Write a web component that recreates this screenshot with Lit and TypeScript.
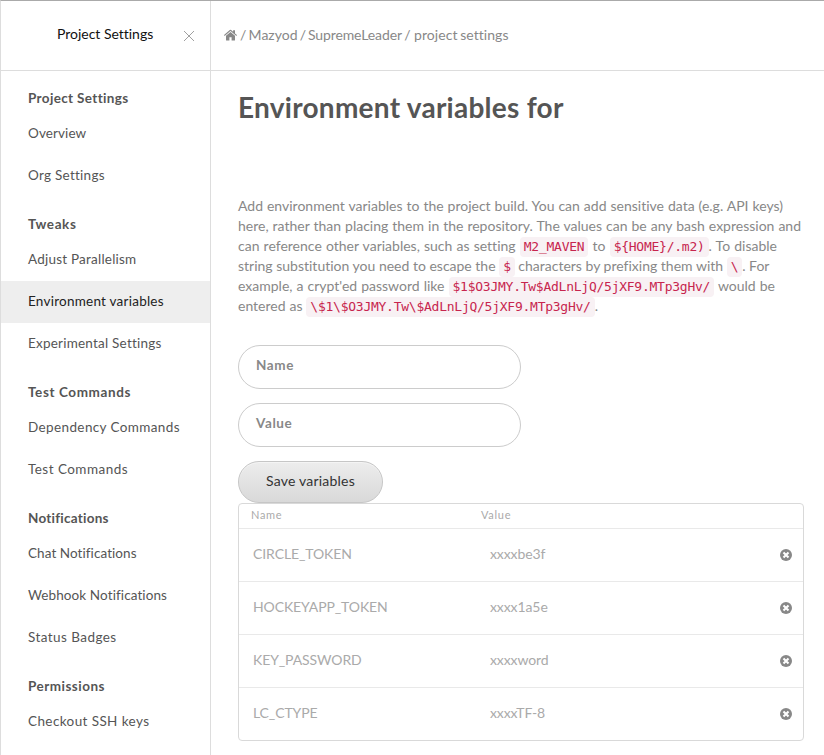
import { LitElement, html, css } from "lit";
import { customElement, property } from "lit/decorators.js";
import { classMap } from "lit/directives/class-map.js";
import { styleMap } from "lit/directives/style-map.js";

// Each label carries its own tracking in pixels.
type Label = [text: string, tracking: number];

interface Section {
  title: Label;
  items: Label[];
}

const SECTIONS: Section[] = [
  { title: ["Project Settings", 0.35], items: [["Overview", 0.1], ["Org Settings", 0.27]] },
  {
    title: ["Tweaks", 0.6],
    items: [["Adjust Parallelism", 0.22], ["Environment variables", 0.24], ["Experimental Settings", 0.22]],
  },
  { title: ["Test Commands", 0.6], items: [["Dependency Commands", 0.38], ["Test Commands", 0.46]] },
  {
    title: ["Notifications", 0.25],
    items: [["Chat Notifications", 0.07], ["Webhook Notifications", 0.1], ["Status Badges", 0.44]],
  },
  { title: ["Permissions", 0.48], items: [["Checkout SSH keys", 0.4]] },
];

const VARIABLES = [
  { name: "CIRCLE_TOKEN", value: "xxxxbe3f" },
  { name: "HOCKEYAPP_TOKEN", value: "xxxx1a5e" },
  { name: "KEY_PASSWORD", value: "xxxxword" },
  { name: "LC_CTYPE", value: "xxxxTF-8" },
];

const track = (px: number) => styleMap({ letterSpacing: `${px}px` });

@customElement("settings-nav")
export class SettingsNav extends LitElement {
  @property() active = "";

  static styles = css`
    :host { display: block; background: #fff; }
    .head {
      display: flex; align-items: center; box-sizing: border-box; height: 70px;
      padding: 0 16px 3px 56px; border-bottom: 1px solid #ddd;
      color: #111; font-size: 14px; letter-spacing: -0.02px;
    }
    .head span { flex: 1; white-space: nowrap; padding-bottom: 2px; }
    .close { display: block; width: 10px; height: 10px; margin-top: 4px; }
    .title, .item {
      height: 42px; box-sizing: border-box; padding-left: 27px; white-space: nowrap; color: #555;
      font-size: 13.5px;
    }
    .title { font-weight: 700; line-height: 54px; }
    .item { line-height: 41px; }
    .active { background: #eee; color: #222; }
  `;

  render() {
    return html`
      <div class="head">
        <span>Project Settings</span>
        <svg class="close" viewBox="0 0 10 10"><path d="M0 0L10 10M10 0L0 10" stroke="#888" stroke-width=".8" /></svg>
      </div>
      ${SECTIONS.map(
        ({ title, items }) => html`
          <div class="title" style=${track(title[1])}>${title[0]}</div>
          ${items.map(
            ([text, px]) =>
              html`<div class=${classMap({ item: true, active: text === this.active })} style=${track(px)}>${text}</div>`,
          )}
        `,
      )}
    `;
  }
}

@customElement("variable-table")
export class VariableTable extends LitElement {
  static styles = css`
    :host {
      display: block; box-sizing: border-box; width: 566px; height: 238px;
      border: 1px solid #d9d9d9; border-radius: 4px; color: #aaa;
    }
    .labels, .row { display: grid; align-items: center; white-space: nowrap; }
    .labels {
      grid-template-columns: 230px 1fr; height: 24px; box-sizing: border-box; padding: 0 0 3px 12px;
      font-size: 11px; letter-spacing: 0.7px;
    }
    .row {
      grid-template-columns: 237px 1fr 12px; height: 53px; box-sizing: border-box;
      border-top: 1px solid #e9e9e9; padding: 0 11px 0 14px; font-size: 14px; letter-spacing: -0.1px;
    }
    .row span { padding-bottom: 4px; }
    .remove { display: block; width: 12px; height: 12px; }
  `;

  render() {
    return html`
      <div class="labels"><span>Name</span><span>Value</span></div>
      ${VARIABLES.map(
        (v) => html`
          <div class="row">
            <span>${v.name}</span><span>${v.value}</span>
            <svg class="remove" viewBox="0 0 12 12">
              <circle cx="6" cy="6" r="6" fill="#888" />
              <path d="M3.5 3.5L8.5 8.5M8.5 3.5L3.5 8.5" stroke="#fff" stroke-width="2.1" />
            </svg>
          </div>
        `,
      )}
    `;
  }
}

@customElement("app-root")
export class AppRoot extends LitElement {
  static styles = css`
    :host {
      display: grid; grid-template-columns: 209px 1fr; box-sizing: border-box; width: 824px; height: 755px;
      overflow: hidden; border-top: 1px solid #aaa; border-left: 1px solid #ddd; background: #fff;
      font-family: Lato, "Open Sans", sans-serif; font-variant-ligatures: none; color: #888;
    }
    main { border-left: 1px solid #ddd; }
    .crumbs {
      display: flex; align-items: center; gap: 3px; height: 70px; box-sizing: border-box;
      border-bottom: 1px solid #ddd; padding: 0 0 0 13px; font-size: 14px; white-space: pre;
    }
    .crumbs span { word-spacing: -0.9px; padding-bottom: 3px; }
    .crumbs .owner { word-spacing: -1.3px; }
    .crumbs .repo { letter-spacing: -0.1px; margin-left: -3.5px; }
    .crumbs .page { letter-spacing: 0.05px; margin-left: -2px; }
    .home { display: block; width: 13px; height: 12px; margin-bottom: 1px; }
    .body { padding: 18px 20px 0 27px; }
    h1 {
      margin: 0; color: #555; font-size: 28px; line-height: 36px; font-weight: 700; white-space: nowrap;
      letter-spacing: 0.26px;
    }
    .intro { margin-top: 71px; font-size: 14px; line-height: 20px; }
    .line { height: 20px; white-space: nowrap; text-align-last: justify; }
    .l1 { width: 545px; } .l2 { width: 563px; } .l3 { width: 539px; }
    .l4 { width: 530px; } .l5 { width: 537px; } .l6 { width: 360px; }
    code {
      font-family: "DejaVu Sans Mono", monospace; font-size: 13px; letter-spacing: -0.25px; color: #c7254e;
      background: #f8f1f4; border-radius: 4px; padding: 2px 4px 3px; line-height: 14px;
    }
    .fields { margin-top: 29px; }
    .field {
      box-sizing: border-box; width: 283px; height: 44px; border: 1px solid #ccc; border-radius: 22px;
      padding-left: 17px; line-height: 39px; font-size: 13.5px; font-weight: 700; letter-spacing: 0.6px;
      margin-bottom: 14px;
    }
    .save {
      display: block; box-sizing: border-box; width: 145px; height: 42px; border: 1px solid #c6c6c6;
      border-radius: 21px; background: linear-gradient(#ededed, #d9d9d9); color: #333; text-align: center;
      font: 14px Lato, sans-serif; letter-spacing: 0.2px; padding: 0 0 3px;
      box-shadow: inset 0 1px 0 #f4f4f4;
    }
  `;

  render() {
    return html`
      <settings-nav active="Environment variables"></settings-nav>
      <main>
        <div class="crumbs">
          <svg class="home" viewBox="0 0 13 12" fill="#888">
            <path d="M6.5 3L2 6.8V11q0 .5.5.5H5.4V8.2H7.6v3.3h2.9q.5 0 .5-.5V6.8z" />
            <path d="M0 6.1L5.8 1.1q.7-.5 1.4 0L9.1 2.8V1.2H11V4.4l2 1.7-.6.8L6.5 2 .6 6.9z" />
          </svg>
          <span class="owner">/ Mazyod / </span>
          <span class="repo">SupremeLeader / </span>
          <span class="page">project settings</span>
        </div>
        <div class="body">
          <h1>Environment variables for</h1>
          <div class="intro">
            <div class="line l1">Add environment variables to the project build. You can add sensitive data (e.g. API keys)</div>
            <div class="line l2">here, rather than placing them in the repository. The values can be any bash expression and</div>
            <div class="line l3">can reference other variables, such as setting <code>M2_MAVEN</code> to <code>\${HOME}/.m2)</code>. To disable</div>
            <div class="line l4">string substitution you need to escape the <code>$</code> characters by prefixing them with <code>\\</code>. For</div>
            <div class="line l5">example, a crypt'ed password like <code>$1$O3JMY.Tw$AdLnLjQ/5jXF9.MTp3gHv/</code> would be</div>
            <div class="line l6">entered as <code>\\$1\\$O3JMY.Tw\\$AdLnLjQ/5jXF9.MTp3gHv/</code>.</div>
          </div>
          <div class="fields">
            <div class="field">Name</div>
            <div class="field">Value</div>
          </div>
          <button class="save">Save variables</button>
          <variable-table></variable-table>
        </div>
      </main>
    `;
  }
}
